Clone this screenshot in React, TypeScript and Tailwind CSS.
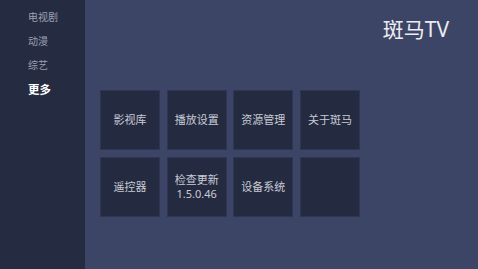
export default function App() {
  const nav = [
    { label: "电视剧", active: false },
    { label: "动漫", active: false },
    { label: "综艺", active: false },
    { label: "更多", active: true },
  ];

  const tiles = [
    ["影视库"],
    ["播放设置"],
    ["资源管理"],
    ["关于斑马"],
    ["遥控器"],
    ["检查更新", "1.5.0.46"],
    ["设备系统"],
    [],
  ];

  return (
    <div
      className="flex h-[269px] w-[478px] overflow-hidden bg-[#3c4566]"
      style={{ fontFamily: '"Noto Sans", "Noto Sans CJK SC", sans-serif' }}
    >
      <aside className="flex w-[85px] shrink-0 flex-col bg-[#252b41] pl-[28px] pt-[5px]">
        {nav.map((item) => (
          <div
            key={item.label}
            className={
              item.active
                ? "flex h-[24.3px] items-center text-[11.5px] font-bold text-white"
                : "flex h-[24.3px] items-center text-[10px] text-[#9ca1b3]"
            }
          >
            {item.label}
          </div>
        ))}
      </aside>

      <main className="flex flex-1 flex-col pl-[15px]">
        <div className="flex justify-end pr-[29px] pt-[15px]">
          <span className="text-[21px] leading-[28px] text-[#ecedf2]">斑马TV</span>
        </div>
        <div className="mt-[47px] grid w-fit grid-cols-[repeat(4,60px)] gap-[6.67px]">
          {tiles.map((lines, i) => (
            <div
              key={i}
              className="flex h-[60px] flex-col items-center justify-center border border-[#2f3655] bg-[#242a40] text-[11px] leading-[14px] text-[#c9ccd6]"
            >
              {lines.map((l) => (
                <span key={l}>{l}</span>
              ))}
            </div>
          ))}
        </div>
      </main>
    </div>
  );
}
